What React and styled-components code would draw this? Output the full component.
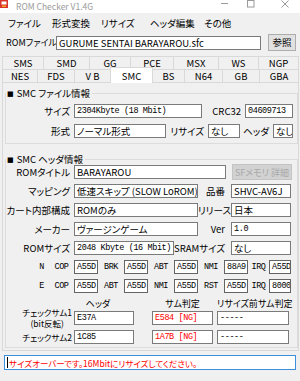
import React from 'react'
import styled, { createGlobalStyle } from 'styled-components'

const MONO = '"Liberation Mono", "Noto Sans CJK JP", monospace'

const GlobalStyle = createGlobalStyle`
  html, body {
    margin: 0;
    padding: 0;
    background: #f0f0f0;
  }
  body {
    font-family: "Noto Sans CJK JP", "Noto Sans", sans-serif;
    font-size: 9.5px;
    font-feature-settings: "palt" 1;
    color: #000;
  }
  * {
    box-sizing: border-box;
  }
`

const Window = styled.div`
  width: 300px;
  height: 381px;
  background: #f0f0f0;
  overflow: hidden;
`

const TitleBar = styled.div`
  height: 13px;
  background: #fff;
  display: flex;
  align-items: flex-start;
  color: #9a9a9a;
`

const Title = styled.span`
  margin: 1px 0 0 8px;
  font-size: 8.5px;
  line-height: 10px;
`

const Controls = styled.div`
  margin-left: auto;
  padding-right: 11px;
  display: flex;
  align-items: flex-start;
`

const Ctl = styled.svg`
  margin-left: ${p => p.$ml || 0}px;
  stroke: #9a9a9a;
  fill: none;
`

const MenuBar = styled.div`
  height: 20px;
  display: flex;
  align-items: center;
  padding-left: 8px;
`

const MenuItem = styled.span`
  width: ${p => p.$w}px;
  line-height: 12px;
  white-space: nowrap;
`

const FileRow = styled.div`
  height: 17px;
  margin-top: 1px;
  display: flex;
  align-items: center;
  padding-left: 6px;
`

const FileLabel = styled.span`
  width: 50px;
  font-size: 9px;
  line-height: 12px;
  white-space: nowrap;
`

const TabRow = styled.div`
  display: flex;
  align-items: flex-end;
  height: 13px;
  padding-left: 2px;
  margin-top: ${p => p.$mt || 0}px;
`

const Tab = styled.div`
  width: ${p => p.$w + 1}px;
  height: ${p => (p.$active ? 16 : 13)}px;
  margin-left: -1px;
  border: 1px solid #d9d9d9;
  border-bottom: none;
  background: ${p => (p.$active ? '#fff' : '#f0f0f0')};
  display: flex;
  align-items: center;
  justify-content: center;
  line-height: 10px;
  white-space: nowrap;
  ${p => p.$active && 'margin-bottom: -1px; position: relative; z-index: 1;'}
  &:first-child {
    margin-left: 0;
  }
`

const Panel = styled.div`
  margin-left: 2px;
  width: 297px;
  border: 1px solid #d9d9d9;
  padding: 5px 1px 2px 1px;
`

const Group = styled.fieldset`
  margin: ${p => p.$mt || 0}px 0 0 1px;
  padding: 0 0 ${p => p.$pb}px 0;
  width: 293px;
  min-inline-size: 0;
  border: 1px solid #dcdcdc;
`

const Legend = styled.legend`
  margin-left: 0;
  padding: 0 2px 0 1px;
  font-size: 9.5px;
  line-height: 10px;
  white-space: nowrap;
`

const Mark = styled.span`
  font-family: "DejaVu Sans", sans-serif;
  font-size: 7px;
  margin-right: 3px;
  vertical-align: 1px;
`

const Row = styled.div`
  display: flex;
  align-items: center;
  height: ${p => p.$h || 14}px;
  margin-top: ${p => p.$mt ?? 5}px;
`

const Label = styled.div`
  width: ${p => p.$w}px;
  flex-shrink: 0;
  padding-right: ${p => p.$pr ?? 4}px;
  text-align: right;
  line-height: 12px;
  white-space: nowrap;
`

const Box = styled.div`
  width: ${p => p.$w}px;
  height: 14px;
  flex-shrink: 0;
  margin-left: ${p => p.$ml || 0}px;
  border: 1px solid ${p => (p.$dark ? '#646464' : '#7a7a7a')};
  background: #fff;
  padding-left: 2px;
  display: flex;
  align-items: center;
  white-space: nowrap;
  overflow: hidden;
  color: ${p => (p.$red ? '#f00' : '#000')};
  font-family: ${p => (p.$mono ? MONO : 'inherit')};
  font-size: ${p => (p.$mono ? '8.5px' : '9.5px')};
  letter-spacing: ${p => (p.$mono ? '-0.4px' : '0')};
  line-height: 12px;
`

const Button = styled.div`
  width: ${p => p.$w}px;
  height: ${p => p.$h}px;
  flex-shrink: 0;
  margin-left: ${p => p.$ml || 0}px;
  border: 1px solid ${p => (p.$disabled ? '#c4c4c4' : '#adadad')};
  background: ${p => (p.$disabled ? '#d2d2d2' : '#e1e1e1')};
  color: ${p => (p.$disabled ? '#a9a9a9' : '#000')};
  font-size: ${p => (p.$disabled ? 9 : 9.5)}px;
  display: flex;
  align-items: center;
  justify-content: center;
  white-space: nowrap;
  line-height: 11px;
`

const VecRow = styled.div`
  display: grid;
  grid-template-columns: 15px 25px 24px 26px 24px 26px 24px 26px 24px 21px 23px;
  align-items: center;
  height: 14px;
  margin: 5px 0 0 28px;
`

const VecLabel = styled.span`
  text-align: center;
  font-family: ${MONO};
  font-size: 8.5px;
  letter-spacing: -0.4px;
  line-height: 12px;
`

const Head = styled.div`
  width: ${p => p.$w}px;
  margin-left: ${p => p.$ml || 0}px;
  text-align: center;
  white-space: nowrap;
  font-size: 9px;
  line-height: 12px;
`

const SumLabel = styled.div`
  width: 68px;
  flex-shrink: 0;
  padding-right: 2px;
  display: flex;
  justify-content: flex-end;
  font-size: 8.5px;
  span {
    display: block;
    text-align: center;
    line-height: 11px;
    white-space: nowrap;
  }
`

const Status = styled.div`
  margin: 4px 0 0 4px;
  width: 292px;
  height: 15px;
  border: 1px solid #3c8fdc;
  background: #fff;
  color: #f00;
  display: flex;
  align-items: center;
  padding-left: 2px;
  font-size: 8.5px;
  line-height: 12px;
  white-space: nowrap;
  overflow: hidden;
`

const Caret = styled.span`
  width: 1px;
  height: 11px;
  background: #000;
  margin-right: 1px;
`

const AppIcon = () => (
  <svg width="8" height="9" viewBox="0 0 8 9">
    <rect x="0" y="0" width="8" height="8" fill="#d9342b" />
    <rect x="1.5" y="1.5" width="5" height="3" fill="#fff" />
    <rect x="2" y="5.5" width="4" height="1.5" fill="#f5a623" />
  </svg>
)

const topTabs = [['SMS', 41], ['SMD', 46], ['GG', 41], ['PCE', 43], ['MSX', 45], ['WS', 40], ['NGP', 40]]
const bottomTabs = [['NES', 35], ['FDS', 37], ['V B', 36], ['SMC', 42], ['BS', 32], ['N64', 38], ['GB', 37], ['GBA', 39]]

const vectors = [
  ['N', 'COP', 'A55D', 'BRK', 'A55D', 'ABT', 'A55D', 'NMI', '88A9', 'IRQ', 'A55D'],
  ['E', 'COP', 'A55D', 'ABT', 'A55D', 'NMI', 'A55D', 'RST', 'A55D', 'IRQ', '8000'],
]

const App = () => {
  return (
    <Window>
      <GlobalStyle />
      <TitleBar>
        <AppIcon />
        <Title>ROM Checker V1.4G</Title>
        <Controls>
          <Ctl width="7" height="9"><line x1="0" y1="3.5" x2="7" y2="3.5" /></Ctl>
          <Ctl $ml={19} width="8" height="9"><rect x="0.5" y="0.5" width="6.5" height="6.5" /></Ctl>
          <Ctl $ml={26} width="8" height="9"><path d="M0.5 0.5 L7.5 7.5 M7.5 0.5 L0.5 7.5" /></Ctl>
        </Controls>
      </TitleBar>

      <MenuBar>
        <MenuItem $w={44}>ファイル</MenuItem>
        <MenuItem $w={49}>形式変換</MenuItem>
        <MenuItem $w={49}>リサイズ</MenuItem>
        <MenuItem $w={54}>ヘッダ編集</MenuItem>
        <MenuItem>その他</MenuItem>
      </MenuBar>

      <FileRow>
        <FileLabel>ROMファイル</FileLabel>
        <Box $w={205}>GURUME SENTAI BARAYAROU.sfc</Box>
        <Button $w={28} $h={17} $ml={7}>参照</Button>
      </FileRow>

      <TabRow $mt={5}>
        {topTabs.map(([name, w]) => (
          <Tab key={name} $w={w}>{name}</Tab>
        ))}
      </TabRow>
      <TabRow>
        {bottomTabs.map(([name, w]) => (
          <Tab key={name} $w={w} $active={name === 'SMC'}>{name}</Tab>
        ))}
      </TabRow>

      <Panel>
        <Group $pb={5}>
          <Legend><Mark>■</Mark>SMC ファイル情報</Legend>
          <Row>
            <Label $w={68}>サイズ</Label>
            <Box $w={128} $mono>2304Kbyte (18 Mbit)</Box>
            <Label $w={43}>CRC32</Label>
            <Box $w={48} $mono>04609713</Box>
          </Row>
          <Row $mt={6}>
            <Label $w={68}>形式</Label>
            <Box $w={92}>ノーマル形式</Box>
            <Label $w={42}>リサイズ</Label>
            <Box $w={32}>なし</Box>
            <Label $w={33}>ヘッダ</Label>
            <Box $w={20}>なし</Box>
          </Row>
        </Group>

        <Group $mt={10} $pb={3}>
          <Legend><Mark>■</Mark>SMC ヘッダ情報</Legend>
          <Row $mt={0}>
            <Label $w={68}>ROMタイトル</Label>
            <Box $w={152}>BARAYAROU</Box>
            <Button $w={60} $h={16} $ml={6} $disabled>SFメモリ 詳細</Button>
          </Row>
          <Row>
            <Label $w={68}>マッピング</Label>
            <Box $w={124}>低速スキップ (SLOW LoROM)</Box>
            <Label $w={33} $pr={6}>品番</Label>
            <Box $w={60}>SHVC-AV6J</Box>
          </Row>
          <Row>
            <Label $w={68}>カート内部構成</Label>
            <Box $w={124}>ROMのみ</Box>
            <Label $w={33} $pr={6}>リリース</Label>
            <Box $w={60}>日本</Box>
          </Row>
          <Row>
            <Label $w={68}>メーカー</Label>
            <Box $w={124}>ヴァージンゲーム</Box>
            <Label $w={33} $pr={6}>Ver</Label>
            <Box $w={60} $mono>1.0</Box>
          </Row>
          <Row>
            <Label $w={68}>ROMサイズ</Label>
            <Box $w={100} $mono>2048 Kbyte (16 Mbit)</Box>
            <Label $w={57} $pr={6}>SRAMサイズ</Label>
            <Box $w={60}>なし</Box>
          </Row>

          {vectors.map(row => (
            <VecRow key={row[0]}>
              {row.map((v, i) =>
                i >= 2 && i % 2 === 0 ? (
                  <Box key={i} $w={i === 10 ? 22 : 24} $mono $dark>{v}</Box>
                ) : (
                  <VecLabel key={i}>{v}</VecLabel>
                )
              )}
            </VecRow>
          ))}

          <Row $h={12}>
            <Head $w={48} $ml={68}>ヘッダ</Head>
            <Head $w={61} $ml={30}>サム判定</Head>
            <Head $w={72} $ml={4}>リサイズ前サム判定</Head>
          </Row>
          <Row $mt={1}>
            <SumLabel><span>チェックサム1<br />(bit反転)</span></SumLabel>
            <Box $w={60} $mono>E37A</Box>
            <Box $w={61} $ml={18} $mono $red>E584 [NG]</Box>
            <Box $w={72} $ml={4} $mono>-----</Box>
          </Row>
          <Row>
            <SumLabel><span>チェックサム2</span></SumLabel>
            <Box $w={60} $mono>1C85</Box>
            <Box $w={61} $ml={18} $mono $red>1A7B [NG]</Box>
            <Box $w={72} $ml={4} $mono>-----</Box>
          </Row>
        </Group>
      </Panel>

      <Status>
        <Caret />
        サイズオーバーです。16Mbitにリサイズしてください。
      </Status>
    </Window>
  )
}

export default App
